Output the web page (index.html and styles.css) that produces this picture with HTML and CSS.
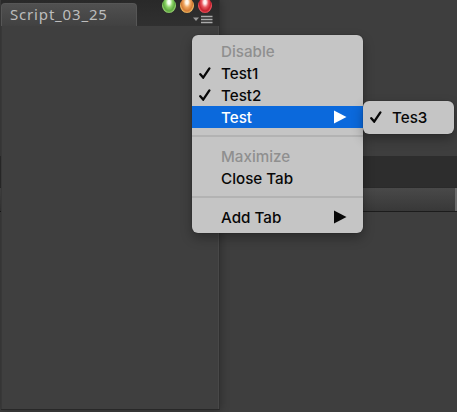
FILE: index.html
```html
<!DOCTYPE html>
<html lang="en">
<head>
<meta charset="utf-8">
<title>Script_03_25</title>
<link rel="stylesheet" href="styles.css">
</head>
<body>
<main class="desktop">
  <div class="backdrop">
    <div class="strip"></div>
    <div class="toolbar"><span class="toolbar-end"></span></div>
  </div>
  <section class="window">
    <header class="titlebar">
      <div class="tab">Script_03_25</div>
      <div class="controls">
        <div class="lights"><i class="light green"></i><i class="light orange"></i><i class="light red"></i></div>
        <svg class="options" width="20" height="9" viewBox="0 0 20 9"><path d="M0 2.5h6L3 6z" fill="#999"/><path d="M8 1.5h11.5M8 4.5h11.5M8 7.5h11.5" stroke="#aaa" stroke-width="1.5"/></svg>
      </div>
    </header>
    <div class="content"></div>
  </section>
  <nav class="menu main-menu">
    <div class="item disabled"><span class="mark"></span><span class="label">Disable</span></div>
    <div class="item"><span class="mark"><svg width="12" height="12" viewBox="0 0 12 12"><path d="M1.3 7.2L4.2 10.6L10.4 1.4"/></svg></span><span class="label">Test1</span></div>
    <div class="item"><span class="mark"><svg width="12" height="12" viewBox="0 0 12 12"><path d="M1.3 7.2L4.2 10.6L10.4 1.4"/></svg></span><span class="label">Test2</span></div>
    <div class="item selected"><span class="mark"></span><span class="label">Test</span><svg class="arrow" width="13" height="14" viewBox="0 0 13 14"><path d="M0 .5L12.5 7L0 13.5z"/></svg></div>
    <div class="separator"></div>
    <div class="item disabled"><span class="mark"></span><span class="label">Maximize</span></div>
    <div class="item"><span class="mark"></span><span class="label">Close Tab</span></div>
    <div class="separator"></div>
    <div class="item"><span class="mark"></span><span class="label">Add Tab</span><svg class="arrow" width="13" height="14" viewBox="0 0 13 14"><path d="M0 .5L12.5 7L0 13.5z"/></svg></div>
  </nav>
  <nav class="menu submenu">
    <div class="item"><span class="mark"><svg width="12" height="12" viewBox="0 0 12 12"><path d="M1.3 7.2L4.2 10.6L10.4 1.4"/></svg></span><span class="label">Tes3</span></div>
  </nav>
</main>
</body>
</html>
```

FILE: styles.css
```css
* { box-sizing: border-box; }
body { margin: 0; }
.desktop {
  position: relative;
  width: 457px;
  height: 412px;
  overflow: hidden;
  background: #3e3e3e;
}
.backdrop { padding-top: 156px; }
.strip { height: 31px; background: #2d2d2d; }
.toolbar {
  display: flex;
  justify-content: flex-end;
  height: 25px;
  border-top: 1px solid #2a2a2a;
  border-bottom: 1px solid #1c1c1c;
  background: linear-gradient(#494949, #383838);
}
.toolbar-end { width: 2px; background: #6a6a6a; }
.window {
  position: absolute;
  left: 1px;
  top: 0;
  display: flex;
  flex-direction: column;
  width: 219px;
  height: 410px;
  border-right: 1px solid #303030;
  border-bottom: 1px solid #282828;
  background: #3f3f3f;
  box-shadow: 0 0 9px rgba(0, 0, 0, .32);
}
.titlebar {
  display: flex;
  align-items: flex-end;
  justify-content: space-between;
  height: 26px;
  background: linear-gradient(#292929, #303030);
}
.tab {
  width: 136px;
  height: 23px;
  padding-left: 8px;
  border: 1px solid #565656;
  border-bottom: 0;
  border-radius: 4px 4px 0 0;
  background: linear-gradient(#505050, #414141);
  color: #bdbdbd;
  font: 15px/20px "Noto Sans", sans-serif;
  letter-spacing: .83px;
}
.controls {
  display: flex;
  flex-direction: column;
  align-items: flex-end;
  align-self: flex-start;
  width: 60px;
  padding-right: 6px;
}
.lights { display: flex; gap: 4px; height: 15px; margin-right: 1px; }
.light {
  width: 14px;
  height: 15px;
  margin-top: -2px;
  border-radius: 50%;
}
.green { background: radial-gradient(ellipse at 50% 28%, #f5fff0 0 12%, #8fd66a 34%, #5da83f 58%, #9ad173 72%, #284c1c 100%); }
.orange { background: radial-gradient(ellipse at 50% 28%, #fff7e9 0 12%, #efa65f 34%, #d17a34 58%, #f0bd65 72%, #5c3616 100%); }
.red { background: radial-gradient(ellipse at 50% 28%, #fff0f0 0 12%, #e95860 34%, #c41f2c 58%, #ef5661 72%, #5d1419 100%); }
.options { display: block; }
.content {
  flex: 1;
  border-left: 1px solid #383838;
  border-right: 1px solid #484848;
}
.menu {
  position: absolute;
  border-radius: 6px;
  background: #c5c5c5;
  box-shadow: 0 0 1px rgba(0, 0, 0, .7), 0 5px 12px rgba(0, 0, 0, .3);
  color: #080808;
  font: 500 15.2px/22px Inter, sans-serif;
}
.main-menu { left: 192px; top: 34.5px; width: 170.5px; height: 198.5px; padding-top: 5.5px; }
.submenu { left: 363px; top: 100.5px; width: 91px; height: 33.5px; padding-top: 5.5px; }
.item { display: flex; align-items: center; height: 22px; padding-right: 16px; white-space: nowrap; }
.label { padding-top: 2px; }
.mark { display: flex; width: 29px; height: 22px; padding-left: 7px; align-items: center; }
.mark path { fill: none; stroke: #080808; stroke-width: 2.3; stroke-linecap: round; }
.disabled { color: #8f8f8f; }
.selected { background: #0b69dc; color: #fff; }
.arrow { margin-left: auto; fill: currentColor; }
.separator { height: 17px; padding-top: 7px; }
.separator::before { content: ""; display: block; height: 2px; background: #b3b3b3; }
```
